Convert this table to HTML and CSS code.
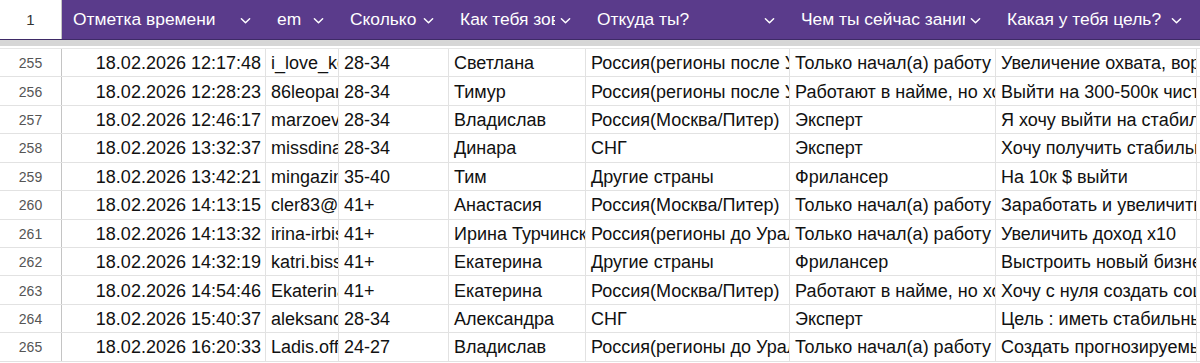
FILE: index.html
```html
<!DOCTYPE html>
<html lang="ru">
<head>
<meta charset="utf-8">
<title>Таблица ответов</title>
<link rel="stylesheet" href="styles.css">
</head>
<body>
<div class="sheet">
  <div class="row head">
    <div class="rn">1</div>
    <div class="hc"><span class="ht">Отметка времени</span><svg class="chev" viewBox="0 0 12 8"><path d="M1.5 1.5 L6 6 L10.5 1.5"/></svg></div>
    <div class="hc"><span class="ht">em</span><svg class="chev" viewBox="0 0 12 8"><path d="M1.5 1.5 L6 6 L10.5 1.5"/></svg></div>
    <div class="hc"><span class="ht">Сколько тебе лет?</span><svg class="chev" viewBox="0 0 12 8"><path d="M1.5 1.5 L6 6 L10.5 1.5"/></svg></div>
    <div class="hc"><span class="ht">Как тебя зовут?</span><svg class="chev" viewBox="0 0 12 8"><path d="M1.5 1.5 L6 6 L10.5 1.5"/></svg></div>
    <div class="hc"><span class="ht">Откуда ты?</span><svg class="chev" viewBox="0 0 12 8"><path d="M1.5 1.5 L6 6 L10.5 1.5"/></svg></div>
    <div class="hc"><span class="ht">Чем ты сейчас занимаешься?</span><svg class="chev" viewBox="0 0 12 8"><path d="M1.5 1.5 L6 6 L10.5 1.5"/></svg></div>
    <div class="hc"><span class="ht">Какая у тебя цель?</span><svg class="chev" viewBox="0 0 12 8"><path d="M1.5 1.5 L6 6 L10.5 1.5"/></svg></div>
    <div class="hc"></div>
  </div>
  <div class="band"></div>
  <div class="gap"></div>

  <div class="row"><div class="rn">255</div><div class="c r">18.02.2026 12:17:48</div><div class="c">i_love_kosmo</div><div class="c">28-34</div><div class="c">Светлана</div><div class="c">Россия(регионы после Урала)</div><div class="c">Только начал(а) работу</div><div class="c">Увеличение охвата, воронки</div><div class="c"></div></div>
  <div class="row"><div class="rn">256</div><div class="c r">18.02.2026 12:28:23</div><div class="c">86leopard</div><div class="c">28-34</div><div class="c">Тимур</div><div class="c">Россия(регионы после Урала)</div><div class="c">Работают в найме, но хотят</div><div class="c">Выйти на 300-500к чистыми</div><div class="c"></div></div>
  <div class="row"><div class="rn">257</div><div class="c r">18.02.2026 12:46:17</div><div class="c">marzoeva</div><div class="c">28-34</div><div class="c">Владислав</div><div class="c">Россия(Москва/Питер)</div><div class="c">Эксперт</div><div class="c">Я хочу выйти на стабильный доход</div><div class="c"></div></div>
  <div class="row"><div class="rn">258</div><div class="c r">18.02.2026 13:32:37</div><div class="c">missdinara</div><div class="c">28-34</div><div class="c">Динара</div><div class="c">СНГ</div><div class="c">Эксперт</div><div class="c">Хочу получить стабильный доход</div><div class="c"></div></div>
  <div class="row"><div class="rn">259</div><div class="c r">18.02.2026 13:42:21</div><div class="c">mingazin</div><div class="c">35-40</div><div class="c">Тим</div><div class="c">Другие страны</div><div class="c">Фрилансер</div><div class="c">На 10к $ выйти</div><div class="c"></div></div>
  <div class="row"><div class="rn">260</div><div class="c r">18.02.2026 14:13:15</div><div class="c">cler83@mail</div><div class="c">41+</div><div class="c">Анастасия</div><div class="c">Россия(Москва/Питер)</div><div class="c">Только начал(а) работу</div><div class="c">Заработать и увеличить доход</div><div class="c"></div></div>
  <div class="row"><div class="rn">261</div><div class="c r">18.02.2026 14:13:32</div><div class="c">irina-irbis</div><div class="c">41+</div><div class="c">Ирина Турчинская</div><div class="c">Россия(регионы до Урала)</div><div class="c">Только начал(а) работу</div><div class="c">Увеличить доход х10</div><div class="c"></div></div>
  <div class="row"><div class="rn">262</div><div class="c r">18.02.2026 14:32:19</div><div class="c">katri.biss</div><div class="c">41+</div><div class="c">Екатерина</div><div class="c">Другие страны</div><div class="c">Фрилансер</div><div class="c">Выстроить новый бизнес</div><div class="c"></div></div>
  <div class="row"><div class="rn">263</div><div class="c r">18.02.2026 14:54:46</div><div class="c">Ekaterina</div><div class="c">41+</div><div class="c">Екатерина</div><div class="c">Россия(Москва/Питер)</div><div class="c">Работают в найме, но хотят</div><div class="c">Хочу с нуля создать соцсети</div><div class="c"></div></div>
  <div class="row"><div class="rn">264</div><div class="c r">18.02.2026 15:40:37</div><div class="c">aleksandra</div><div class="c">28-34</div><div class="c">Александра</div><div class="c">СНГ</div><div class="c">Эксперт</div><div class="c">Цель : иметь стабильный доход</div><div class="c"></div></div>
  <div class="row"><div class="rn">265</div><div class="c r">18.02.2026 16:20:33</div><div class="c">Ladis.off</div><div class="c">24-27</div><div class="c">Владислав</div><div class="c">Россия(регионы до Урала)</div><div class="c">Только начал(а) работу</div><div class="c">Создать прогнозируемый доход</div><div class="c"></div></div>
</div>
</body>
</html>
```

FILE: styles.css
```css
* { box-sizing: border-box; }
html, body {
  margin: 0;
  padding: 0;
  background: #ffffff;
  overflow: hidden;
}
body {
  font-family: "Liberation Sans", Arial, sans-serif;
  color: #111;
}
.sheet {
  width: 1220px;
}
.row {
  display: grid;
  grid-template-columns: 62px 204px 73px 110px 137px 204px 206px 201px 23px;
  height: 28.43px;
  border-bottom: 1px solid #e2e2e2;
}
.row.head {
  height: 40px;
  border-bottom: 1px solid #3e2a66;
}
.rn {
  display: flex;
  align-items: center;
  justify-content: center;
  font-size: 14px;
  color: #555;
  border-right: 1px solid #c4c4c4;
  background: #ffffff;
  padding-top: 1px;
}
.head .rn {
  font-size: 15px;
  color: #333;
  padding-top: 0;
}
.hc {
  display: flex;
  align-items: center;
  background: #5a3b8b;
  color: #ffffff;
  padding: 0 15px 0 11px;
  font-size: 17.4px;
  min-width: 0;
}
.ht {
  flex: 1;
  min-width: 0;
  overflow: hidden;
  white-space: nowrap;
  margin-right: 5px;
}
.chev {
  width: 11px;
  height: 8px;
  flex: none;
  fill: none;
  stroke: #ffffff;
  stroke-width: 1.6;
  stroke-linecap: round;
  stroke-linejoin: round;
  margin-top: 2px;
}
.band {
  height: 6px;
  background: #d6d6d6;
}
.gap {
  height: 3px;
  border-bottom: 1px solid #e6e6e6;
}
.c {
  display: flex;
  align-items: center;
  padding: 2px 4px 0 5px;
  font-size: 18px;
  white-space: nowrap;
  overflow: hidden;
  border-right: 1px solid #e2e2e2;
  min-width: 0;
}
.c.r {
  justify-content: flex-end;
  padding-right: 4px;
}
```
